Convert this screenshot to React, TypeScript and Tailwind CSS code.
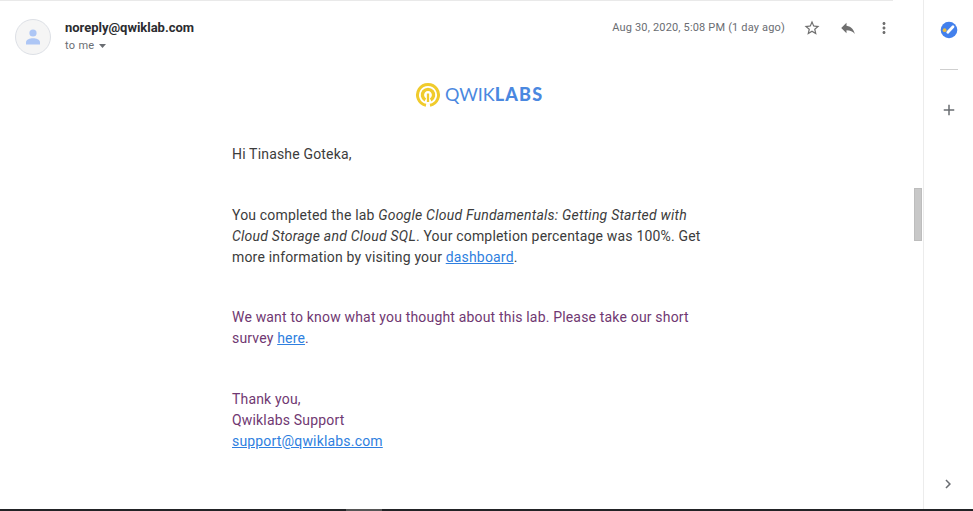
import type { ReactNode } from "react";

function Icon({ d, className }: { d: string; className: string }) {
  return (
    <svg viewBox="0 0 24 24" fill="currentColor" className={className}>
      <path d={d} />
    </svg>
  );
}

function Link({ children }: { children: ReactNode }) {
  return <a className="text-[#2f7fe0] underline">{children}</a>;
}

function Header() {
  return (
    <header className="mr-[21px] flex h-[70px] items-start border-t border-[#e9e9e9] pl-[15px]">
      <div className="mt-[18px] flex size-9 items-center justify-center rounded-full border border-[#dde0e6] bg-[#f5f5f5]">
        <svg viewBox="0 0 14 16" className="h-4 w-3.5" fill="#adc6f5">
          <circle cx="7" cy="4" r="3.6" />
          <path d="M0 15.5v-2.3C0 10.6 4 9.300 7 9.300s7 1.300 7 3.900v2.300z" />
        </svg>
      </div>
      <div className="ml-3.5 mt-[18px]">
        <div className="text-[13px] font-bold leading-[18px] tracking-[-0.02px] text-[#2b2c2f]">noreply@qwiklab.com</div>
        <div className="flex items-center text-[11px] leading-[17px] tracking-[0.3px] text-[#6a6d72]">
          to me
          <svg viewBox="0 0 7 4" className="ml-[5px] mt-px h-1 w-[7px]" fill="#6a6d72">
            <path d="M0 0h7L3.500 4z" />
          </svg>
        </div>
      </div>
      <div className="ml-auto flex h-[54px] items-center text-[#6f6f6f]">
        <span className="text-[11px] tracking-[0.17px] text-[#6a6d72]">Aug 30, 2020, 5:08 PM (1 day ago)</span>
        <Icon
          className="ml-[18px] size-[18px]"
          d="M22 9.240l-7.190-.62L12 2 9.190 8.630 2 9.240l5.460 4.730L5.820 21 12 17.270 18.180 21l-1.630-7.030L22 9.240zM12 15.400l-3.760 2.270 1-4.280-3.320-2.880 4.380-.38L12 6.100l1.710 4.040 4.380.38-3.320 2.880 1 4.280L12 15.400z"
        />
        <Icon className="ml-[18px] size-[18px]" d="M10 9V5l-7 7 7 7v-4.100c5 0 8.500 1.600 11 5.100-1-5-4-10-11-11z" />
        <Icon
          className="ml-[18px] size-[18px]"
          d="M12 8c1.100 0 2-.9 2-2s-.9-2-2-2-2 .9-2 2 .9 2 2 2zm0 2c-1.100 0-2 .9-2 2s.9 2 2 2 2-.9 2-2-.9-2-2-2zm0 6c-1.100 0-2 .9-2 2s.9 2 2 2 2-.9 2-2-.9-2-2-2z"
        />
      </div>
    </header>
  );
}

function Logo() {
  return (
    <div className="ml-[415px] mt-[12px] flex h-[26px] items-center">
      <svg viewBox="0 0 26 26" className="size-[26px]" fill="none" stroke="#f0cb2c">
        <path d="M11 23.300A10.500 10.500 0 1 1 15 23.300" strokeWidth="3" />
        <path d="M10.300 17.900A5.600 5.600 0 1 1 15.700 17.900" strokeWidth="3.400" />
        <path d="M13 11.500V20" strokeWidth="2.300" />
      </svg>
      <div className="mb-0.5 ml-1 flex items-baseline font-['Lato',sans-serif] text-[18px] leading-none text-[#4a88e0]">
        <span className="font-normal tracking-[-0.05px]">QWIK</span>
        <span className="font-black tracking-[1.2px]">LABS</span>
      </div>
    </div>
  );
}

function Message() {
  return (
    <div className="ml-[232px] mt-9 w-[480px] text-[14px] leading-[21px] tracking-[0.175px] text-[#3c3c3c]">
      <p>Hi Tinashe Goteka,</p>
      <p className="mt-10">
        You completed the lab <em className="tracking-[0.23px]">Google Cloud Fundamentals: Getting Started with
        <br />
        Cloud Storage and Cloud SQL</em>. Your completion percentage was 100%. Get
        <br />
        more information by visiting your <Link>dashboard</Link>.
      </p>
      <div className="text-[#703872]">
        <p className="mt-[39px]">
          We want to know what you thought about this lab. Please take our short
          <br />
          survey <Link>here</Link>.
        </p>
        <p className="mt-10">
          Thank you,
          <br />
          Qwiklabs Support
          <br />
          <Link>support@qwiklabs.com</Link>
        </p>
      </div>
    </div>
  );
}

function SidePanel() {
  return (
    <aside className="flex w-[50px] flex-col items-center border-l border-[#ececec] text-[#6a6d72]">
      <svg viewBox="0 0 18 18" className="mt-[21px] size-[18px]">
        <circle cx="9" cy="9" r="8.300" fill="#4380ec" />
        <path d="M7.800 11.200l5.200-5.400" stroke="#fff" strokeWidth="2.800" strokeLinecap="round" />
        <circle cx="4.600" cy="9.200" r="1.900" fill="#e9bb42" />
      </svg>
      <div className="mt-[30px] h-px w-[18px] bg-[#cfcfcf]" />
      <Icon className="mt-[31px] size-[18px]" d="M19 13h-6v6h-2v-6H5v-2h6V5h2v6h6v2z" />
      <Icon className="mb-4 mr-px mt-auto size-[18px]" d="M8.590 16.590L13.170 12 8.590 7.410 10 6l6 6-6 6-1.410-1.410z" />
    </aside>
  );
}

export default function App() {
  return (
    <div className="flex h-[511px] w-[973px] flex-col overflow-hidden bg-white font-['Roboto',sans-serif]">
      <div className="flex min-h-0 flex-1">
        <main className="w-[914px]">
          <Header />
          <Logo />
          <Message />
        </main>
        <div className="w-[9px] pt-[188px]">
          <div className="h-[53px] w-2 border border-[#bdbdbd] bg-[#c8c8c8]" />
        </div>
        <SidePanel />
      </div>
      <div className="h-0.5 bg-[#222326] pl-[346px]">
        <div className="h-full w-9 bg-[#565656]" />
      </div>
    </div>
  );
}
